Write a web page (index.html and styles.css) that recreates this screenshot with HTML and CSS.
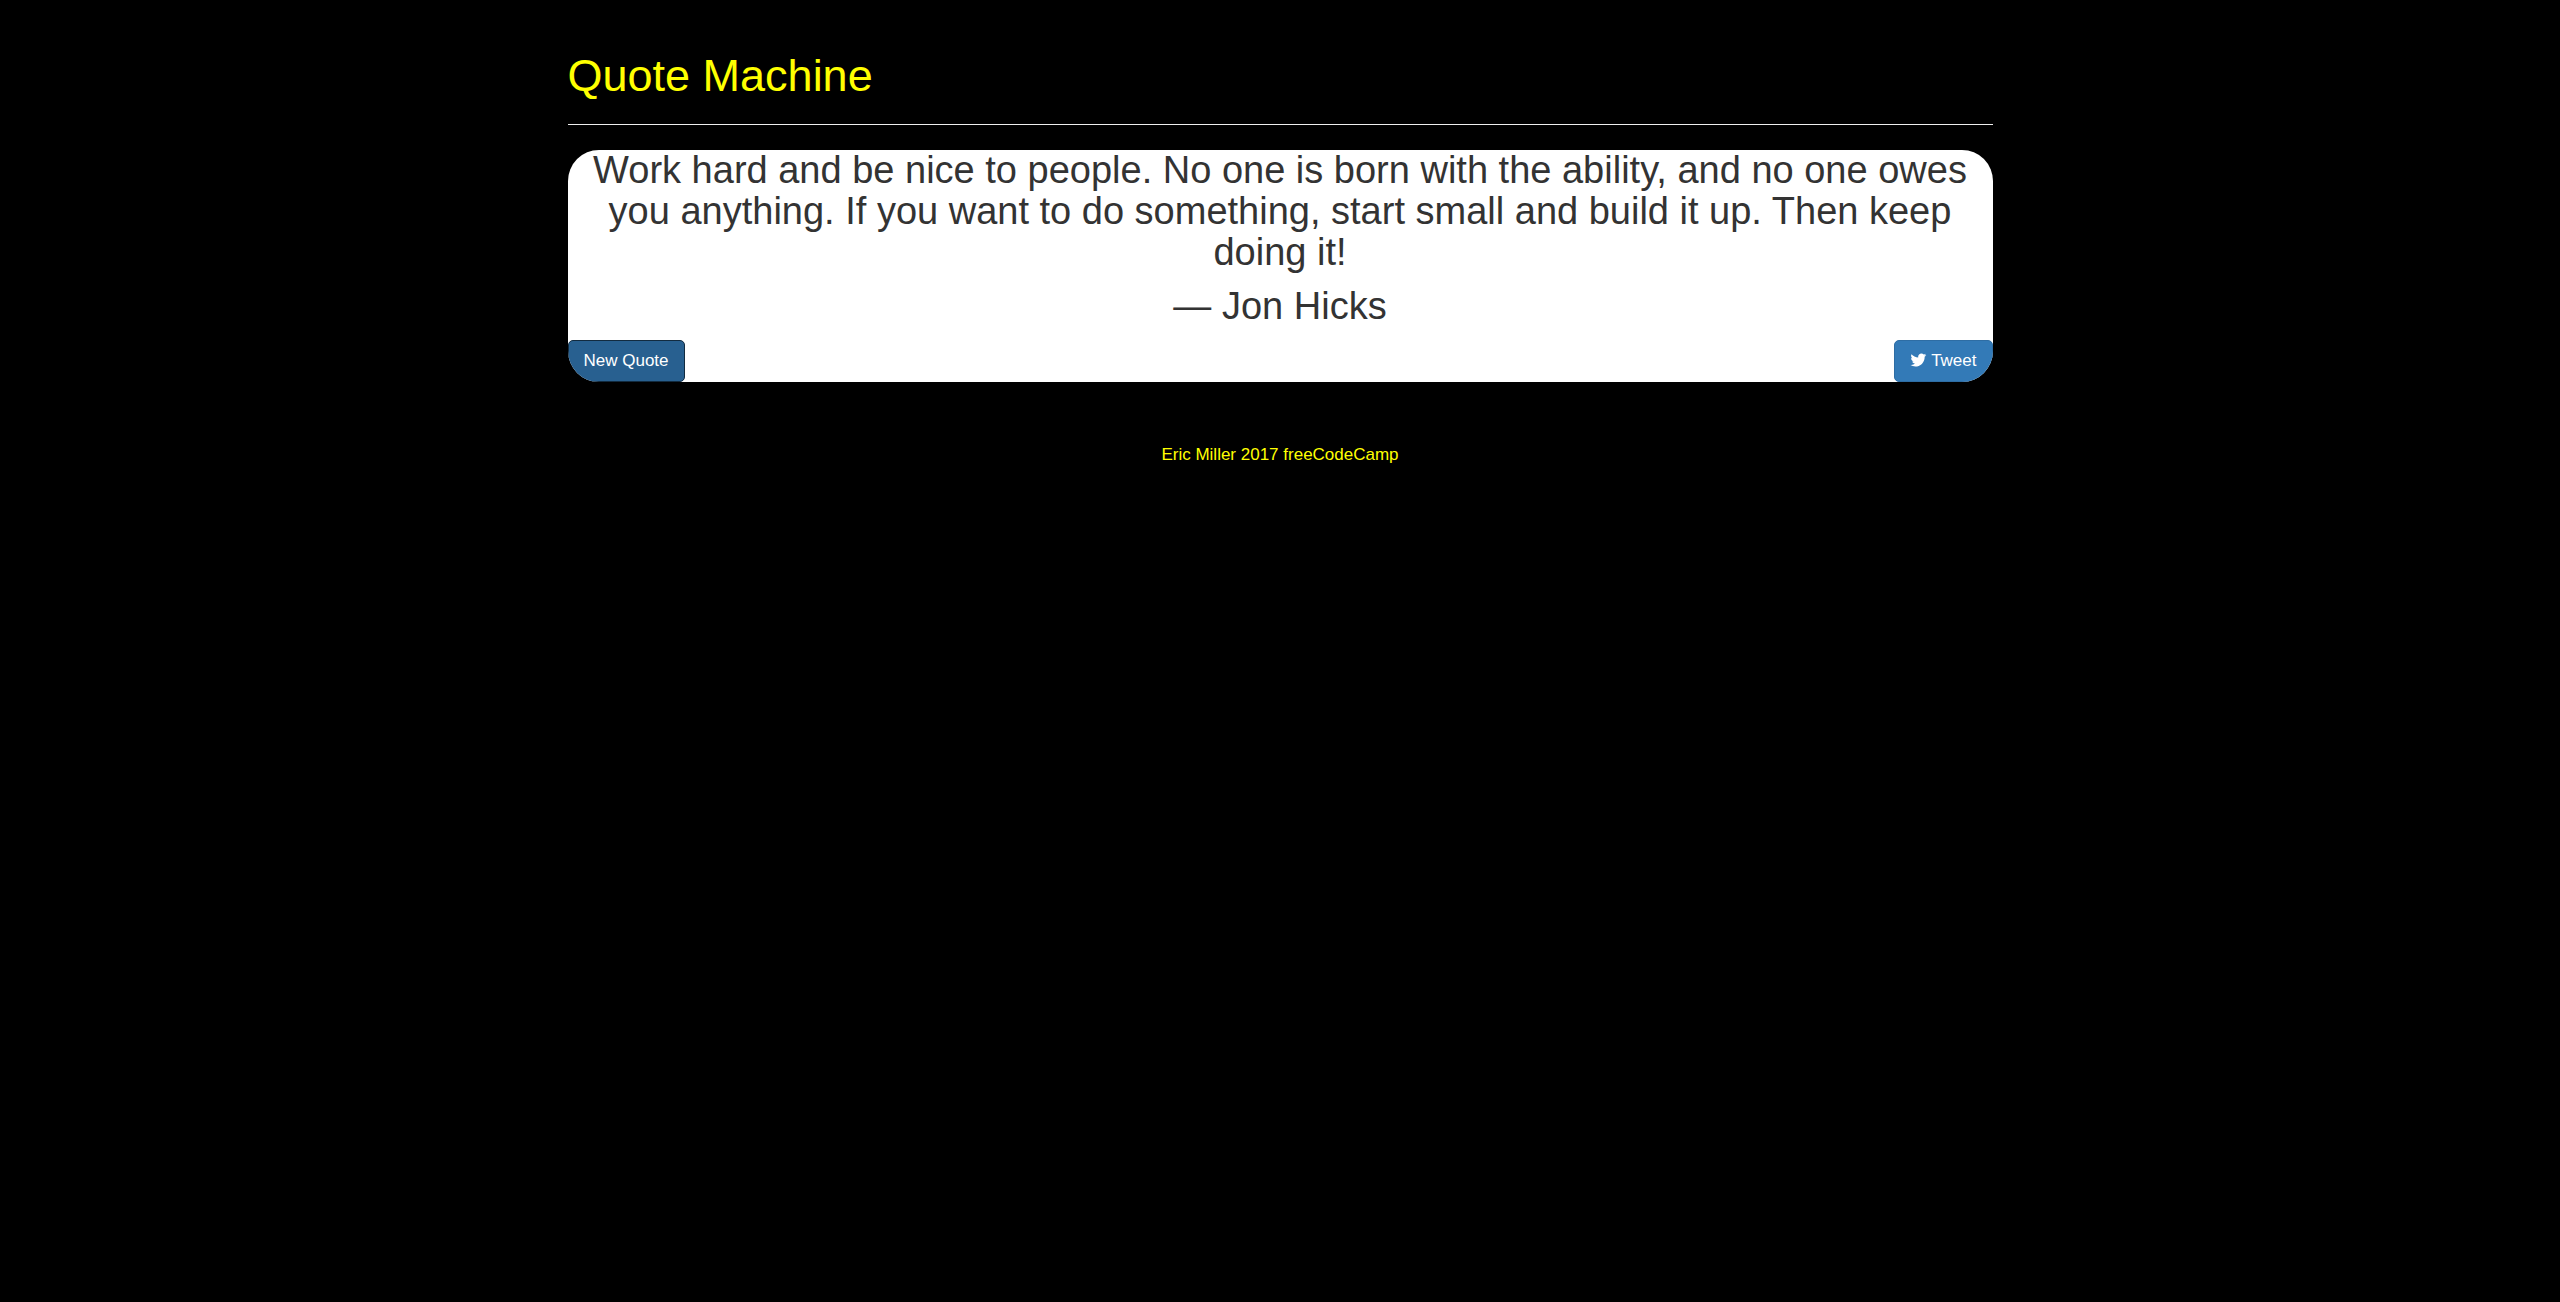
FILE: index.html
```html
<!DOCTYPE html>
<html lang="en">
<head>
    <meta charset="UTF-8">
    <meta name="viewport" content="width=device-width, initial-scale=1.0">
    <title>Quote Machine</title>
    <link rel="stylesheet" href="styles.css">
</head>
<body>

<div class="container">
    <header class="page-header">
        <h1>Quote Machine</h1>
    </header>

    <main class="quote-box">
        <div class="quote">
            <h2 id="quote-text">Work hard and be nice to people. No one is born with the ability, and no one owes you anything. If you want to do something, start small and build it up. Then keep doing it!</h2>
            <h2 id="quote-author">— Jon Hicks</h2>
        </div>
        <div class="buttons">
            <button type="button" id="new-quote" class="btn btn-active">New Quote</button>
            <button type="button" id="tweet" class="btn">
                <svg class="icon" viewBox="0 0 1664 1792" aria-hidden="true">
                    <path d="M1620 408q-67 98-162 167 1 14 1 42 0 130-38 259.500t-115.500 248.500-184.500 210.500-258 146-323 54.500q-271 0-496-145 35 4 78 4 225 0 401-138-105-2-188-64.500t-114-159.500q33 5 61 5 43 0 85-11-112-23-185.500-111.500t-73.500-205.500v-4q68 38 146 41-66-44-105-115t-39-154q0-88 44-163 121 149 294.500 238.500t371.500 99.500q-8-38-8-74 0-134 94.500-228.500t228.500-94.500q140 0 236 102 109-21 205-78-37 115-142 178 93-10 186-50z"/>
                </svg>
                Tweet
            </button>
        </div>
    </main>

    <footer>
        <p>Eric Miller 2017 freeCodeCamp</p>
    </footer>
</div>

</body>
</html>
```

FILE: styles.css
```css
* {
    box-sizing: border-box;
}
body {
    margin: 0;
    background-color: black;
    color: #333;
    font-family: "Liberation Sans", Arial, sans-serif;
    font-size: 17px;
    line-height: 25px;
}
h1, h2 {
    font-weight: 400;
    margin: 0;
}
.container {
    max-width: 1425px;
    margin: 0 auto;
}
.page-header {
    margin: 50px 0 25px;
    padding-bottom: 22px;
    border-bottom: 1px solid #eee;
}
.page-header h1 {
    color: yellow;
    font-size: 45px;
    line-height: 52px;
}
/* clips the outer corners of the buttons */
.quote-box {
    background-color: white;
    border-radius: 31px;
    overflow: hidden;
}
.quote {
    padding: 0 19px;
    text-align: center;
}
.quote h2 {
    font-size: 38px;
    line-height: 41px;
    margin-bottom: 13px;
}
.buttons {
    display: flex;
    justify-content: space-between;
}
.btn {
    padding: 8px 15px;
    background-color: #337ab7;
    border: 1px solid #2e6da4;
    border-radius: 5px;
    color: white;
    font-family: inherit;
    font-size: 17px;
    line-height: 24px;
    cursor: pointer;
}
.btn:hover, .btn-active {
    background-color: #286090;
    border-color: #122b40;
}
.icon {
    height: 18px;
    vertical-align: -3px;
    fill: white;
}
footer {
    margin-top: 60px;
    color: yellow;
    text-align: center;
}
footer p {
    margin: 0;
}
```
